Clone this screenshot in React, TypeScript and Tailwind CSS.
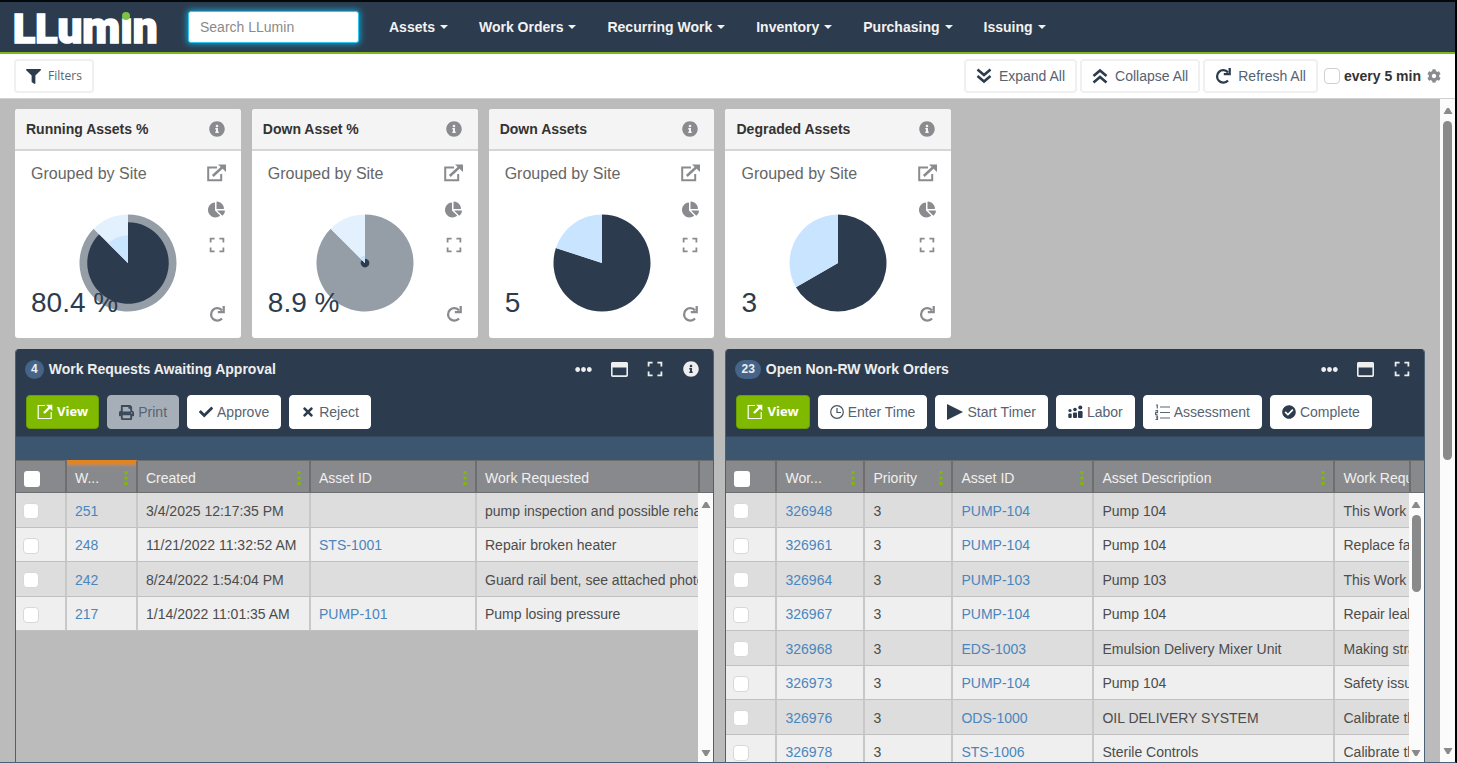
import type { ReactNode } from "react";
import { FaCheck, FaCheckCircle, FaChartPie, FaCog, FaEllipsisH, FaFilter, FaInfoCircle, FaPrint, FaRegWindowMaximize, FaTimes } from "react-icons/fa";

interface Column {
  label: string;
  width?: string;
  menu?: boolean;
  sorted?: boolean;
  link?: boolean;
}

interface Slice {
  share: number;
  color: string;
  faded?: string;
  fill: number;
}

interface Kpi {
  title: string;
  value: string;
  slices: Slice[];
}

const NAV = ["Assets", "Work Orders", "Recurring Work", "Inventory", "Purchasing", "Issuing"];

const KPIS: Kpi[] = [
  {
    title: "Running Assets %",
    value: "80.4 %",
    slices: [
      { share: 0.875, color: "#2c3c4e", faded: "#959da6", fill: 0.84 },
      { share: 0.125, color: "#c9e4ff", faded: "#e3f1ff", fill: 0.57 },
    ],
  },
  {
    title: "Down Asset %",
    value: "8.9 %",
    slices: [
      { share: 0.875, color: "#2c3c4e", faded: "#959da6", fill: 0.09 },
      { share: 0.125, color: "#c9e4ff", faded: "#e3f1ff", fill: 0.15 },
    ],
  },
  {
    title: "Down Assets",
    value: "5",
    slices: [
      { share: 0.8, color: "#2c3c4e", fill: 1 },
      { share: 0.2, color: "#c9e4ff", fill: 1 },
    ],
  },
  {
    title: "Degraded Assets",
    value: "3",
    slices: [
      { share: 0.667, color: "#2c3c4e", fill: 1 },
      { share: 0.333, color: "#c9e4ff", fill: 1 },
    ],
  },
];

const REQUEST_COLUMNS: Column[] = [
  { label: "W...", width: "w-[71px]", menu: true, sorted: true, link: true },
  { label: "Created", width: "w-[173px]", menu: true },
  { label: "Asset ID", width: "w-[166px]", menu: true, link: true },
  { label: "Work Requested" },
];

const REQUEST_ROWS = [
  ["251", "3/4/2025 12:17:35 PM", "", "pump inspection and possible rehab"],
  ["248", "11/21/2022 11:32:52 AM", "STS-1001", "Repair broken heater"],
  ["242", "8/24/2022 1:54:04 PM", "", "Guard rail bent, see attached photo"],
  ["217", "1/14/2022 11:01:35 AM", "PUMP-101", "Pump losing pressure"],
];

const ORDER_COLUMNS: Column[] = [
  { label: "Wor...", width: "w-[88px]", menu: true, link: true },
  { label: "Priority", width: "w-[88px]", menu: true },
  { label: "Asset ID", width: "w-[141px]", menu: true, link: true },
  { label: "Asset Description", width: "w-[241px]", menu: true },
  { label: "Work Requested" },
];

const ORDER_ROWS = [
  ["326948", "3", "PUMP-104", "Pump 104", "This Work Order"],
  ["326961", "3", "PUMP-104", "Pump 104", "Replace failed seal"],
  ["326964", "3", "PUMP-103", "Pump 103", "This Work Order"],
  ["326967", "3", "PUMP-104", "Pump 104", "Repair leak"],
  ["326968", "3", "EDS-1003", "Emulsion Delivery Mixer Unit", "Making strange noise"],
  ["326973", "3", "PUMP-104", "Pump 104", "Safety issue"],
  ["326976", "3", "ODS-1000", "OIL DELIVERY SYSTEM", "Calibrate the sensor"],
  ["326978", "3", "STS-1006", "Sterile Controls", "Calibrate the sensor"],
];

function Logo() {
  return (
    <svg width="149" height="50" viewBox="-3 0 149 50" role="img" aria-label="LLumin" fill="#fff" stroke="#fff" strokeWidth="1.6" className="shrink-0 font-['Roboto',sans-serif] font-black">
      <text x="-1" y="41">
        <tspan fontSize="41">LL</tspan>
        <tspan fontSize="44">umın</tspan>
      </text>
      <circle cx="112" cy="14" r="4" fill="#7fc242" stroke="none" />
    </svg>
  );
}

function DoubleChevron({ up }: { up?: boolean }) {
  return (
    <svg width="16" height="16" viewBox="0 0 16 16" fill="none" stroke="#2c3c4e" strokeWidth="2.6">
      <path d={up ? "M1.5 8 8 2.5 14.5 8M1.5 14.5 8 9l6.5 5.5" : "M1.5 1.5 8 7l6.5-5.5M1.5 8 8 13.5 14.5 8"} />
    </svg>
  );
}

function Redo() {
  return (
    <svg width="16" height="16" viewBox="0 0 16 16" fill="none" stroke="currentColor" strokeWidth="2.3">
      <path d="M13 12.4A6.2 6.2 0 1 1 13 4.4" />
      <path d="M14.7 0v6.2H8.8" />
    </svg>
  );
}

function External() {
  return (
    <svg width="19" height="18" viewBox="0 0 19 18" fill="none" stroke="currentColor" strokeWidth="2">
      <path d="M10 3.5H1.2v12.8h13V10" />
      <path d="M5.8 12 15 3.5" strokeWidth="2.5" />
      <path d="M11 .5h8V8z" fill="currentColor" stroke="none" />
    </svg>
  );
}

function ViewIcon() {
  return (
    <svg width="16" height="16" viewBox="0 0 16 16" fill="none" stroke="#fff">
      <path d="M8 1.5H1.2v13h13V8" strokeWidth="1.2" />
      <path d="M7 9 12.5 3.5" strokeWidth="2.4" />
      <path d="M9 .8h6.3V7z" fill="#fff" stroke="none" />
    </svg>
  );
}

function Expand() {
  return (
    <svg width="16" height="16" viewBox="0 0 16 16" fill="none" stroke="currentColor" strokeWidth="1.8">
      <path d="M1.6 5.6v-4h4M10.4 1.6h4v4M14.4 10.4v4h-4M5.6 14.4h-4v-4" />
    </svg>
  );
}

function Clock() {
  return (
    <svg width="14" height="14" viewBox="0 0 14 14" fill="none" stroke="#45535f" strokeWidth="1.2">
      <circle cx="7" cy="7" r="6.3" />
      <path d="M7 3v4.5h4" />
    </svg>
  );
}

function Play() {
  return (
    <svg width="16" height="16" viewBox="0 0 16 16" fill="#2c3c4e">
      <path d="M0 0v16l16-8z" />
    </svg>
  );
}

function Crew() {
  return (
    <svg width="15" height="14" viewBox="0 0 15 14" fill="#2c3c4e">
      <circle cx="2" cy="5.5" r="1.6" />
      <rect x=".3" y="8.5" width="3.4" height="4.5" rx="1" />
      <circle cx="7" cy="4.5" r="1.8" />
      <rect x="5" y="7.5" width="4" height="5.5" rx="1" />
      <circle cx="12.3" cy="2.6" r="2" />
      <rect x="10" y="6" width="4.6" height="7" rx="1" />
    </svg>
  );
}

function NumberedList() {
  return (
    <svg width="15" height="16" viewBox="0 0 15 16" fill="none" stroke="#5b6672" strokeWidth="1.2">
      <path d="M5 3h10M5 8.5h10M5 14h10" />
      <path d="M1 1h1.3v3.5M.5 6.5h2v1.8h-2v2h2M.5 12h2v3.5h-2M1 13.8h1.5" />
    </svg>
  );
}

// Sector of a circle, clockwise from 12 o'clock
function sector(from: number, to: number, r: number) {
  const point = (t: number) => `${49 + r * Math.sin(t * 2 * Math.PI)} ${49 - r * Math.cos(t * 2 * Math.PI)}`;
  return `M49 49L${point(from)}A${r} ${r} 0 ${to - from > 0.5 ? 1 : 0} 1 ${point(to)}Z`;
}

function Pie({ slices }: { slices: Slice[] }) {
  let start = 0;
  return (
    <svg width="98" height="98" viewBox="0 0 98 98">
      {slices.map((s) => {
        const from = start;
        start += s.share;
        return (
          <g key={s.color}>
            {s.faded && <path d={sector(from, start, 48.5)} fill={s.faded} />}
            <path d={sector(from, start, 48.5 * s.fill)} fill={s.color} />
          </g>
        );
      })}
    </svg>
  );
}

function IconButton({ label, children }: { label: string; children: ReactNode }) {
  return (
    <button aria-label={label} className="flex items-center justify-center w-5 h-5">
      {children}
    </button>
  );
}

function KpiCard({ title, value, slices }: Kpi) {
  return (
    <section className="bg-white rounded-[3px] overflow-hidden">
      <div className="flex items-center justify-between h-[42px] px-[11px] pr-[14px] bg-[#f4f4f4] border-b-2 border-[#d6d6d6] text-[#8a8b8e]">
        <h2 className="text-sm font-bold text-[#333]">{title}</h2>
        <IconButton label="Info">
          <FaInfoCircle size={16} />
        </IconButton>
      </div>
      <div className="grid h-[187px] text-[#8a8b8e]">
        <p className="[grid-area:1/1] self-start pt-[11px] pl-4 text-base text-[#666]">Grouped by Site</p>
        <div className="[grid-area:1/1] self-start justify-self-center pt-[63px]">
          <Pie slices={slices} />
        </div>
        <p className="[grid-area:1/1] self-end z-10 pl-4 pb-[17px] text-[28px] leading-[36px] text-[#2c3c4e]">{value}</p>
        <div className="[grid-area:1/1] justify-self-end flex flex-col gap-4 pt-3 pb-[14px] pr-[14px]">
          <IconButton label="Open">
            <External />
          </IconButton>
          <IconButton label="Chart type">
            <FaChartPie size={17} />
          </IconButton>
          <IconButton label="Full screen">
            <Expand />
          </IconButton>
          <div className="mt-auto">
            <IconButton label="Refresh">
              <Redo />
            </IconButton>
          </div>
        </div>
      </div>
    </section>
  );
}

function ToolButton({ icon, children, primary, disabled }: { icon: ReactNode; children: string; primary?: boolean; disabled?: boolean }) {
  const tone = primary
    ? "px-[10px] bg-[#80ba00] border-[#6c9f06] text-white text-[13px] font-bold font-['Open_Sans',sans-serif]"
    : disabled
      ? "px-[11px] bg-[#a6afb8] border-[#a6afb8] text-[#566371] text-sm"
      : "px-[11px] bg-white border-white text-[#566371] text-sm";
  return (
    <button disabled={disabled} className={`flex items-center gap-1 h-[34px] rounded border whitespace-nowrap ${tone}`}>
      {icon}
      {children}
    </button>
  );
}

function BarButton({ icon, children }: { icon: ReactNode; children: ReactNode }) {
  return (
    <button className="flex items-center gap-[7px] h-[34px] px-[10px] rounded border-2 border-[#f0f0f0] bg-white text-sm text-[#566371] whitespace-nowrap">
      {icon}
      {children}
    </button>
  );
}

function ScrollArrow({ down }: { down?: boolean }) {
  return (
    <svg width="10" height="8" viewBox="0 0 10 8" fill="#8a8a8a" className="shrink-0">
      <path d={down ? "M.5 1h9L6 7H4z" : "M.5 7h9L6 1H4z"} />
    </svg>
  );
}

function Grid({ name, columns, rows, thumb }: { name: string; columns: Column[]; rows: string[][]; thumb?: boolean }) {
  return (
    <div className="flex flex-1 min-h-0">
      <div className="flex-1 min-w-0 overflow-hidden">
        <table className="w-full table-fixed border-separate border-spacing-0 text-sm text-left">
          <thead>
            <tr className="h-[33px] bg-[#88898c] text-[#f0f0f0]">
              <th className="w-[51px] pl-2 border-y border-r-2 border-[#6d6e70]">
                <input type="checkbox" aria-label={`Select all ${name}`} className="block appearance-none w-4 h-4 mt-1 rounded-[3px] bg-white" />
              </th>
              {columns.map((c) => (
                <th
                  key={c.label}
                  className={`px-2 font-normal whitespace-nowrap overflow-hidden border-y border-[#6d6e70] ${c.width ?? ""} ${c.menu ? "border-r-2" : ""} ${c.sorted ? "border-t-[#e08421] bg-linear-to-b from-[#e08421] from-6% to-[#88898c] to-20%" : ""}`}
                >
                  <div className="flex items-center justify-between pt-[3px]">
                    {c.label}
                    {c.menu && (
                      <svg width="4" height="14" viewBox="0 0 4 14" fill="#80ba00">
                        <path d="M.5 0h3v3h-3zM.5 5.5h3v3h-3zM.5 11h3v3h-3z" />
                      </svg>
                    )}
                  </div>
                </th>
              ))}
            </tr>
          </thead>
          <tbody>
            {rows.map((row) => (
              <tr key={row[0]} className="odd:h-[35px] even:h-[34px] odd:bg-[#ddd] even:bg-[#efefef] text-[#4c4c4c]">
                <td className="pl-[7px] border-b border-r-2 border-b-[#c0c0c0] border-r-[#c8c8c8]">
                  <input type="checkbox" aria-label={`Select ${row[0]}`} className="block appearance-none w-4 h-4 mt-[2px] rounded border border-[#d8d8d8] bg-white" />
                </td>
                {row.map((cell, i) => (
                  <td key={i} className={`pt-px pl-2 whitespace-nowrap overflow-hidden border-b border-b-[#c0c0c0] border-r-[#c8c8c8] ${columns[i].menu ? "border-r-2" : ""}`}>
                    {columns[i].link ? (
                      <a href="#" className="text-[#4a86bd]">
                        {cell}
                      </a>
                    ) : (
                      cell
                    )}
                  </td>
                ))}
              </tr>
            ))}
          </tbody>
        </table>
      </div>
      <div className="flex flex-col w-[15px]">
        <div className="h-[33px] shrink-0 bg-[#88898c] border-y border-l-2 border-[#6d6e70]" />
        <div className="flex flex-col flex-1 items-center gap-[6px] pt-2 pb-[5px] bg-[#fbfbfb]">
          <ScrollArrow />
          {thumb && <div className="w-[9px] h-[77px] rounded-full bg-[#8a8a8a]" />}
          <div className="flex-1" />
          <ScrollArrow down />
        </div>
      </div>
    </div>
  );
}

function Panel({ title, count, info, actions, children }: { title: string; count: number; info?: boolean; actions: ReactNode; children: ReactNode }) {
  return (
    <section className="col-span-3 flex flex-col min-h-0 min-w-0 rounded-t border-x border-[#4d6076] bg-[#bbb] overflow-hidden">
      <div className="bg-[#2c3c4e] text-[#eee]">
        <div className="flex items-center h-10 pl-[9px] pr-3">
          <span className="flex items-center h-[19px] px-[6px] mr-[5px] rounded-full bg-[#456488] text-xs font-bold">{count}</span>
          <h2 className="text-sm font-bold">{title}</h2>
          <div className="flex gap-4 ml-auto">
            <IconButton label="More">
              <FaEllipsisH size={17} />
            </IconButton>
            <IconButton label="Window">
              <FaRegWindowMaximize size={17} />
            </IconButton>
            <IconButton label="Full screen">
              <Expand />
            </IconButton>
            {info && (
              <IconButton label="Info">
                <FaInfoCircle size={16} />
              </IconButton>
            )}
          </div>
        </div>
        <div className="flex gap-2 pt-[6px] pb-[7px] px-[10px]">{actions}</div>
      </div>
      <div className="h-6 shrink-0 bg-[#3c566f] border-t border-[#35495e]" />
      {children}
    </section>
  );
}

export default function App() {
  return (
    <div className="flex flex-col h-screen overflow-hidden border-r-2 border-b border-r-black border-b-[#4d6076] bg-white font-['Liberation_Sans',Arial,sans-serif]">
      <header className="flex items-center h-[54px] shrink-0 px-[11px] border-t-2 border-t-[#05080b] border-b-2 border-b-[#80b81c] bg-[#2c3c4e]">
        <Logo />
        <input
          type="text"
          placeholder="Search LLumin"
          aria-label="Search LLumin"
          className="ml-7 w-[171px] h-8 px-[11px] rounded-[3px] border border-[#35c4ee] bg-white text-sm placeholder:text-[#8a8a8a] shadow-[0_0_6px_1px_#12a5d8] outline-none"
        />
        <nav className="flex gap-[31px] ml-[30px]">
          {NAV.map((item) => (
            <button key={item} className="flex items-center gap-[5px] text-sm font-bold text-[#f2f2f2] whitespace-nowrap">
              {item}
              <svg width="8" height="4" viewBox="0 0 8 4" fill="currentColor">
                <path d="M0 0h8L4 4z" />
              </svg>
            </button>
          ))}
        </nav>
      </header>

      <div className="flex items-center h-11 shrink-0 px-[14px] text-[#2c3c4e]">
        <BarButton icon={<FaFilter size={15} color="#2c3c4e" />}>
          <span className="text-xs font-['Open_Sans',sans-serif]">Filters</span>
        </BarButton>
        <div className="flex items-center gap-[3px] ml-auto">
          <BarButton icon={<DoubleChevron />}>Expand All</BarButton>
          <BarButton icon={<DoubleChevron up />}>Collapse All</BarButton>
          <BarButton
            icon={
              <span className="text-[#2c3c4e]">
                <Redo />
              </span>
            }
          >
            Refresh All
          </BarButton>
          <label className="flex items-center gap-1 ml-[3px] text-sm font-bold text-[#333]">
            <input type="checkbox" className="appearance-none w-4 h-4 rounded border border-[#d0d0d0] bg-white" />
            every 5 min
          </label>
          <button aria-label="Refresh settings" className="ml-[3px] text-[#8a8b8e]">
            <FaCog size={14} />
          </button>
        </div>
      </div>

      <div className="flex flex-1 min-h-0 border-t border-[#d0d0d0]">
        <main className="grid grid-cols-6 grid-rows-[auto_minmax(0,1fr)] gap-[11px] flex-1 min-w-0 pt-[10px] px-[15px] bg-[#bbb]">
          {KPIS.map((k) => (
            <KpiCard key={k.title} {...k} />
          ))}
          <div className="col-span-2" />
          <Panel
            title="Work Requests Awaiting Approval"
            count={4}
            info
            actions={
              <>
                <ToolButton primary icon={<ViewIcon />}>View</ToolButton>
                <ToolButton disabled icon={<FaPrint size={15} color="#3c4b5c" />}>Print</ToolButton>
                <ToolButton icon={<FaCheck size={14} color="#2c3c4e" />}>Approve</ToolButton>
                <ToolButton icon={<FaTimes size={14} color="#2c3c4e" />}>Reject</ToolButton>
              </>
            }
          >
            <Grid name="work requests" columns={REQUEST_COLUMNS} rows={REQUEST_ROWS} />
          </Panel>
          <Panel
            title="Open Non-RW Work Orders"
            count={23}
            actions={
              <>
                <ToolButton primary icon={<ViewIcon />}>View</ToolButton>
                <ToolButton icon={<Clock />}>Enter Time</ToolButton>
                <ToolButton icon={<Play />}>Start Timer</ToolButton>
                <ToolButton icon={<Crew />}>Labor</ToolButton>
                <ToolButton icon={<NumberedList />}>Assessment</ToolButton>
                <ToolButton icon={<FaCheckCircle size={14} color="#2c3c4e" />}>Complete</ToolButton>
              </>
            }
          >
            <Grid name="work orders" columns={ORDER_COLUMNS} rows={ORDER_ROWS} thumb />
          </Panel>
        </main>
        <div className="flex flex-col items-center w-[15px] gap-[6px] pt-2 pb-[7px] bg-[#fbfbfb]">
          <ScrollArrow />
          <div className="w-[9px] h-[339px] rounded-full bg-[#8a8a8a]" />
          <div className="flex-1" />
          <ScrollArrow down />
        </div>
      </div>
    </div>
  );
}
